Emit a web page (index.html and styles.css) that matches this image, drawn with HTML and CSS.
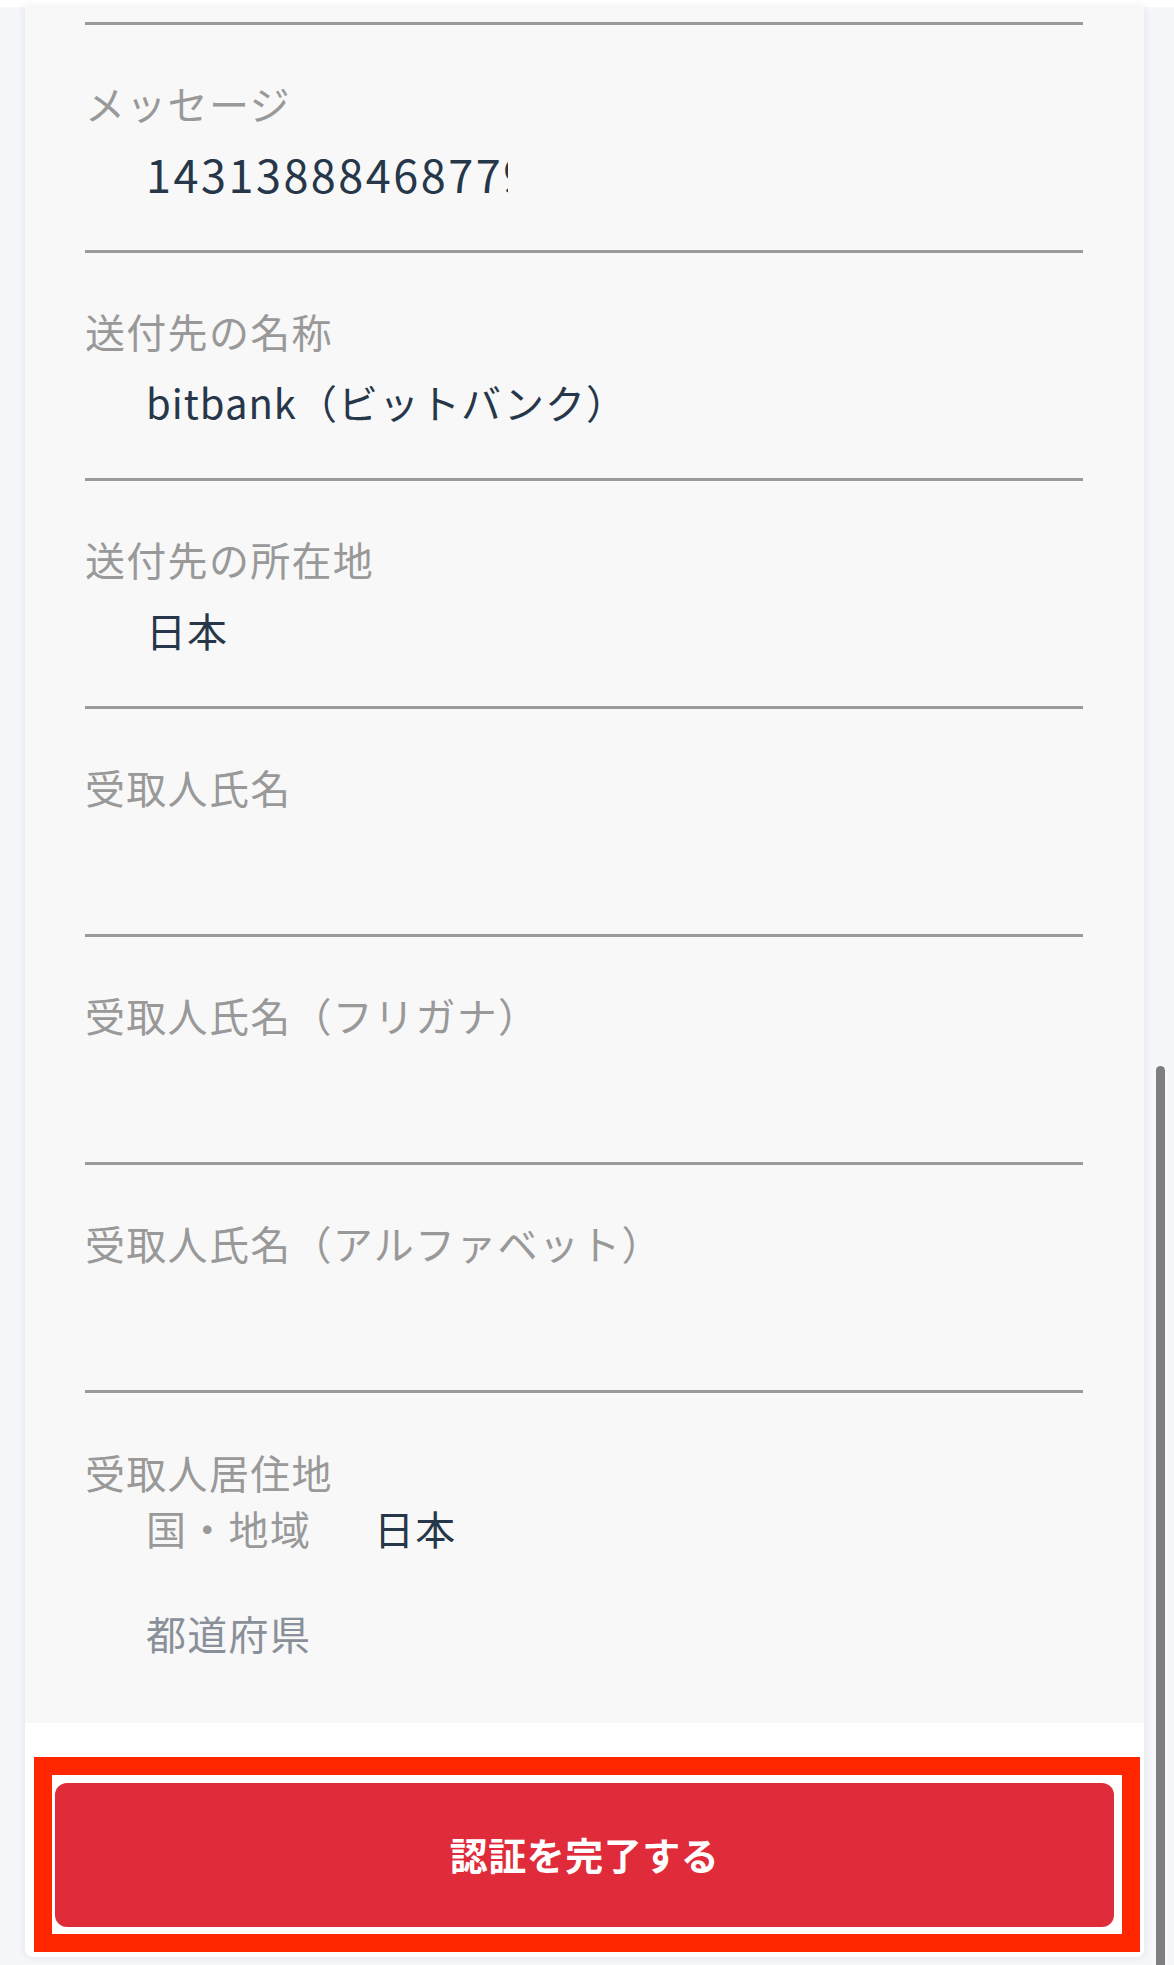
FILE: index.html
```html
<!DOCTYPE html>
<html lang="ja">
<head>
<meta charset="utf-8">
<title>認証</title>
<link rel="stylesheet" href="styles.css">
</head>
<body>
<div class="topband"></div>
<div class="page">
  <div class="card">
    <div class="fields">
      <div class="field">
        <div class="label">メッセージ</div>
        <div class="value clipped">1431388846877927</div>
      </div>
      <div class="field">
        <div class="label">送付先の名称</div>
        <div class="value">bitbank（ビットバンク）</div>
      </div>
      <div class="field">
        <div class="label">送付先の所在地</div>
        <div class="value">日本</div>
      </div>
      <div class="field">
        <div class="label">受取人氏名</div>
        <div class="value"></div>
      </div>
      <div class="field">
        <div class="label">受取人氏名（フリガナ）</div>
        <div class="value"></div>
      </div>
      <div class="field">
        <div class="label">受取人氏名（アルファベット）</div>
        <div class="value"></div>
      </div>
      <div class="field residence">
        <div class="label">受取人居住地</div>
        <div class="sub-row">
          <span class="sub-label">国・地域</span>
          <span class="sub-value">日本</span>
        </div>
        <div class="sub-row second">
          <span class="sub-label pref">都道府県</span>
          <span class="sub-value"></span>
        </div>
      </div>
    </div>
    <div class="footer">
      <div class="highlight">
        <button class="submit" type="button">認証を完了する</button>
      </div>
    </div>
  </div>
  <div class="scrollbar"></div>
</div>
</body>
</html>
```

FILE: styles.css
```css
html, body {
  margin: 0;
  padding: 0;
}
body {
  background: #f5f7fa;
  font-family: "Noto Sans CJK JP", "Noto Sans", sans-serif;
  width: 1174px;
  height: 1965px;
  overflow: hidden;
}
.topband {
  height: 7px;
  background: #ffffff;
}
.page {
  position: relative;
  padding-left: 25px;
}
.card {
  width: 1119px;
  background: #ffffff;
  border-radius: 0 0 8px 8px;
  box-shadow: 0 0 8px rgba(40, 50, 70, 0.10);
  overflow: hidden;
}
.fields {
  background: #f8f8f8;
  padding: 15px 61px 0 60px;
}
.field {
  border-top: 3px solid #9a9a9a;
  height: 225px;
}
.label {
  margin-top: 53px;
  font-size: 40px;
  line-height: 50px;
  letter-spacing: 1.3px;
  color: #999999;
  white-space: nowrap;
}
.value {
  margin-top: 21px;
  padding-left: 61px;
  font-size: 40px;
  line-height: 50px;
  height: 50px;
  letter-spacing: 1px;
  color: #27374a;
  white-space: nowrap;
}
.value.clipped {
  width: 362px;
  overflow: hidden;
  font-size: 45px;
  letter-spacing: 2.5px;
}
.residence {
  height: 330px;
}
.residence .label {
  margin-top: 54px;
}
.sub-row {
  display: grid;
  grid-template-columns: 228px auto;
  margin-top: 6px;
  padding-left: 61px;
  font-size: 40px;
  line-height: 50px;
  letter-spacing: 1.3px;
  white-space: nowrap;
}
.sub-row.second {
  margin-top: 55px;
}
.sub-label {
  color: #999999;
}
.sub-label.pref {
  color: #8a9099;
}
.sub-value {
  color: #27374a;
}
.footer {
  background: #ffffff;
  padding: 34px 4px 5px 9px;
}
.highlight {
  border: 18px solid #ff2600;
  padding: 8px 8px 7px 3px;
  background: #ffffff;
}
.submit {
  display: block;
  width: 100%;
  height: 144px;
  border: none;
  border-radius: 12px;
  background: #e02b3a;
  color: #ffffff;
  font-family: "Noto Sans CJK JP", "Noto Sans", sans-serif;
  font-size: 38px;
  font-weight: 700;
  letter-spacing: 0.5px;
  padding: 0 0 4px 0;
}
.scrollbar {
  position: absolute;
  left: 1156px;
  top: 1059px;
  width: 9px;
  height: 960px;
  border-radius: 5px;
  background: #7e7e80;
}
```
